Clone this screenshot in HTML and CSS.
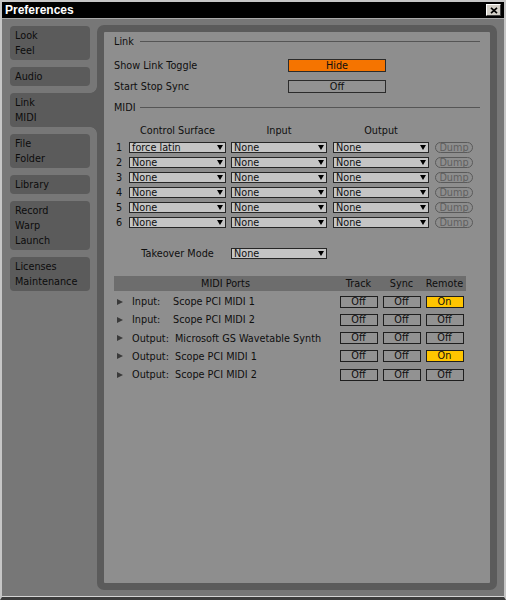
FILE: index.html
```html
<!DOCTYPE html>
<html>
<head>
<meta charset="utf-8">
<title>Preferences</title>
<link rel="stylesheet" href="styles.css">
</head>
<body>
<div class="window">
  <div class="titlebar">
    <span class="title">Preferences</span>
    <span class="close"><svg width="8" height="7" viewBox="0 0 8 7"><path d="M1 0.8 L7 6.2 M7 0.8 L1 6.2" stroke="#000" stroke-width="1.7" fill="none"/></svg></span>
  </div>
  <div class="body">
    <nav class="tabs">
      <div class="tab"><div>Look</div><div>Feel</div></div>
      <div class="tab"><div>Audio</div></div>
      <div class="tab active"><div>Link</div><div>MIDI</div></div>
      <div class="tab"><div>File</div><div>Folder</div></div>
      <div class="tab"><div>Library</div></div>
      <div class="tab"><div>Record</div><div>Warp</div><div>Launch</div></div>
      <div class="tab"><div>Licenses</div><div>Maintenance</div></div>
    </nav>
    <main class="panel">
      <div class="inner">
        <div class="sec-head"><span>Link</span><span class="rule"></span></div>
        <div class="settings">
          <div class="setting"><span class="setting-label">Show Link Toggle</span><span class="btn btn-orange">Hide</span></div>
          <div class="setting"><span class="setting-label">Start Stop Sync</span><span class="btn">Off</span></div>
        </div>
        <div class="sec-head sec-midi"><span>MIDI</span><span class="rule"></span></div>

        <div class="cs-grid">
          <span></span><span class="colh">Control Surface</span><span class="colh">Input</span><span class="colh">Output</span><span></span>

          <span class="num">1</span>
          <span class="dd dd-cs"><span>force latin</span><span class="arrow"></span></span>
          <span class="dd"><span>None</span><span class="arrow"></span></span>
          <span class="dd"><span>None</span><span class="arrow"></span></span>
          <span class="dump">Dump</span>

          <span class="num">2</span>
          <span class="dd dd-cs"><span>None</span><span class="arrow"></span></span>
          <span class="dd"><span>None</span><span class="arrow"></span></span>
          <span class="dd"><span>None</span><span class="arrow"></span></span>
          <span class="dump">Dump</span>

          <span class="num">3</span>
          <span class="dd dd-cs"><span>None</span><span class="arrow"></span></span>
          <span class="dd"><span>None</span><span class="arrow"></span></span>
          <span class="dd"><span>None</span><span class="arrow"></span></span>
          <span class="dump">Dump</span>

          <span class="num">4</span>
          <span class="dd dd-cs"><span>None</span><span class="arrow"></span></span>
          <span class="dd"><span>None</span><span class="arrow"></span></span>
          <span class="dd"><span>None</span><span class="arrow"></span></span>
          <span class="dump">Dump</span>

          <span class="num">5</span>
          <span class="dd dd-cs"><span>None</span><span class="arrow"></span></span>
          <span class="dd"><span>None</span><span class="arrow"></span></span>
          <span class="dd"><span>None</span><span class="arrow"></span></span>
          <span class="dump">Dump</span>

          <span class="num">6</span>
          <span class="dd dd-cs"><span>None</span><span class="arrow"></span></span>
          <span class="dd"><span>None</span><span class="arrow"></span></span>
          <span class="dd"><span>None</span><span class="arrow"></span></span>
          <span class="dump">Dump</span>
        </div>

        <div class="takeover">
          <span></span>
          <span class="takeover-label">Takeover Mode</span>
          <span class="dd"><span>None</span><span class="arrow"></span></span>
        </div>

        <div class="ports">
          <div class="ports-head">
            <span>MIDI Ports</span><span>Track</span><span>Sync</span><span>Remote</span>
          </div>
          <div class="ports-body">
            <div class="port-row">
              <span class="port-name"><span class="tri"></span><span class="lbl-in">Input:</span><span>Scope PCI MIDI 1</span></span>
              <span class="pbtn">Off</span><span class="pbtn">Off</span><span class="pbtn pbtn-on">On</span>
            </div>
            <div class="port-row">
              <span class="port-name"><span class="tri"></span><span class="lbl-in">Input:</span><span>Scope PCI MIDI 2</span></span>
              <span class="pbtn">Off</span><span class="pbtn">Off</span><span class="pbtn">Off</span>
            </div>
            <div class="port-row">
              <span class="port-name"><span class="tri"></span><span class="lbl-out">Output:</span><span>Microsoft GS Wavetable Synth</span></span>
              <span class="pbtn">Off</span><span class="pbtn">Off</span><span class="pbtn">Off</span>
            </div>
            <div class="port-row">
              <span class="port-name"><span class="tri"></span><span class="lbl-out">Output:</span><span>Scope PCI MIDI 1</span></span>
              <span class="pbtn">Off</span><span class="pbtn">Off</span><span class="pbtn pbtn-on">On</span>
            </div>
            <div class="port-row">
              <span class="port-name"><span class="tri"></span><span class="lbl-out">Output:</span><span>Scope PCI MIDI 2</span></span>
              <span class="pbtn">Off</span><span class="pbtn">Off</span><span class="pbtn">Off</span>
            </div>
          </div>
        </div>
      </div>
    </main>
  </div>
</div>
</body>
</html>
```
FILE: styles.css
```css
* { box-sizing: border-box; }
html, body { margin: 0; padding: 0; }
body {
  width: 506px;
  height: 600px;
  overflow: hidden;
  background: #777777;
  font-family: "DejaVu Sans", Verdana, sans-serif;
  font-size: 9.7px;
  color: #0e0e0e;
}
.window {
  width: 506px;
  height: 600px;
  display: flex;
  flex-direction: column;
  background: #777777;
  border: 2px solid #c6c6c6;
  border-bottom: 3px solid #3c3c3c;
  box-shadow: inset 0 -1px 0 #d4d4d4;
}
.titlebar {
  height: 17px;
  flex: none;
  background: #000;
  border-bottom: 1px solid #a8a8a8;
  display: flex;
  align-items: center;
  justify-content: space-between;
  padding: 0 3px 0 3px;
}
.title {
  font-family: "Liberation Sans", Arial, sans-serif;
  font-weight: bold;
  font-size: 12px;
  line-height: 16px;
  color: #fff;
}
.close {
  width: 15px;
  height: 12px;
  background: #d4d0c8;
  border-top: 1px solid #fff;
  border-left: 1px solid #fff;
  border-right: 1px solid #404040;
  border-bottom: 1px solid #404040;
  display: flex;
  align-items: center;
  justify-content: center;
}
.close svg { display: block; }

.body {
  flex: 1;
  display: flex;
  padding: 6px 7px 7px 8px;
}
.tabs {
  width: 80px;
  flex: none;
  margin-right: 7px;
  display: flex;
  flex-direction: column;
  gap: 7px;
  padding-top: 1px;
}
.tab {
  background: #5b5b5b;
  border-radius: 4px;
  padding: 2px 5px;
  line-height: 15px;
  color: #0c0c0c;
}
.tab.active {
  margin-right: -7px;
  border-radius: 4px 0 0 4px;
  position: relative;
}
.tab.active::before,
.tab.active::after {
  content: "";
  position: absolute;
  left: 80px;
  width: 7px;
  height: 7px;
}
.tab.active::before {
  top: -7px;
  background: radial-gradient(circle at 0 0, #777777 6.5px, #5b5b5b 7.2px);
}
.tab.active::after {
  bottom: -7px;
  background: radial-gradient(circle at 0 100%, #777777 6.5px, #5b5b5b 7.2px);
}

.panel {
  flex: 1;
  display: flex;
  background: #5b5b5b;
  border-radius: 7px;
  padding: 7px;
}
.inner {
  flex: 1;
  background: #8e8e8e;
  border-radius: 1px;
  padding: 3px 10px 0 10px;
}

.sec-head {
  display: flex;
  align-items: center;
  height: 13px;
  line-height: 13px;
  gap: 6px;
}
.sec-midi { margin-top: 8px; gap: 4px; }
.rule {
  flex: 1;
  height: 1px;
  background: #555;
}

.settings {
  margin-top: 11px;
  display: flex;
  flex-direction: column;
  gap: 8px;
}
.setting {
  display: flex;
  align-items: center;
  height: 13px;
}
.setting-label { width: 174px; }
.btn {
  width: 98px;
  height: 13px;
  border: 1px solid #2b2b2b;
  background: #929292;
  text-align: center;
  line-height: 11px;
}
.btn-orange { background: #f57400; }

.cs-grid {
  margin-top: 10px;
  display: grid;
  grid-template-columns: 15px 102px 102px 102px 38px;
  grid-template-rows: 14px repeat(6, 11px);
  row-gap: 4px;
}
.colh {
  text-align: center;
  width: 97px;
  line-height: 13px;
}
.cs-grid .colh:nth-child(3), .cs-grid .colh:nth-child(4) { width: 96px; }
.num {
  padding-left: 2px;
  line-height: 11px;
}
.dd {
  width: 96px;
  height: 11px;
  border: 1px solid #262626;
  background: #c5c5c5;
  display: flex;
  align-items: center;
  justify-content: space-between;
  padding: 0 2px 0 2px;
  line-height: 9px;
}
.dd-cs { width: 97px; }
.arrow {
  width: 0;
  height: 0;
  border-left: 3px solid transparent;
  border-right: 3px solid transparent;
  border-top: 5px solid #000;
}
.dump {
  width: 38px;
  height: 11px;
  border: 1px solid #5a5a5a;
  border-radius: 6px;
  color: #606060;
  text-align: center;
  line-height: 9px;
}

.takeover {
  margin-top: 20px;
  display: grid;
  grid-template-columns: 15px 102px 102px;
  grid-template-rows: 11px;
}
.takeover-label {
  width: 97px;
  text-align: center;
  line-height: 11px;
}

.ports { margin-top: 17px; width: 352px; }
.ports-head {
  display: grid;
  grid-template-columns: 223px 43px 43px 43px;
  background: #6d6d6d;
  height: 15px;
  line-height: 15px;
  text-align: center;
}
.ports-body { padding-top: 1.5px; }
.port-row {
  display: grid;
  grid-template-columns: 223px 43px 43px 43px;
  height: 18.25px;
  align-items: center;
}
.port-name {
  display: flex;
  align-items: center;
  white-space: nowrap;
}
.tri {
  width: 0;
  height: 0;
  margin-left: 3px;
  margin-right: 9px;
  border-left: 6px solid #3a3a3a;
  border-top: 3.5px solid transparent;
  border-bottom: 3.5px solid transparent;
}
.lbl-in { width: 41px; }
.lbl-out { width: 43px; }
.pbtn {
  justify-self: center;
  width: 38px;
  height: 12px;
  border: 1px solid #1e1e1e;
  background: #929292;
  text-align: center;
  line-height: 10px;
}
.pbtn-on { background: #ffc500; }
```
